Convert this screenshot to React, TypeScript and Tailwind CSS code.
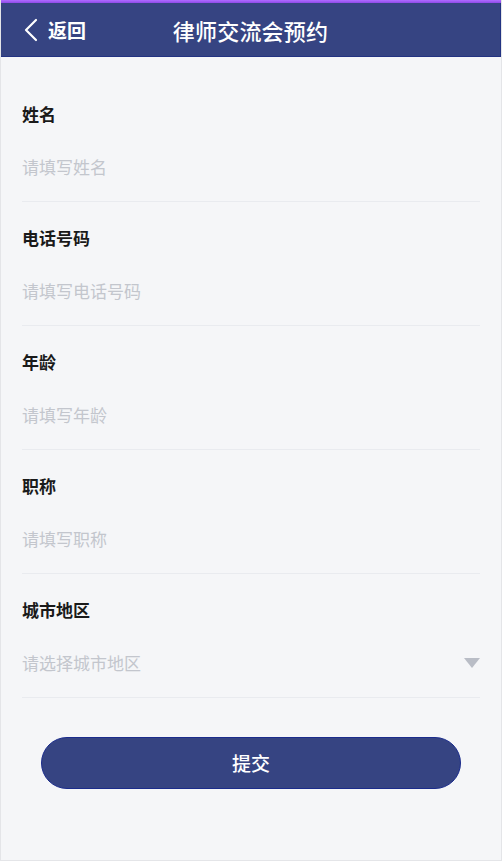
import * as React from "react";

const fields: { label: string; placeholder: string; select?: boolean }[] = [
  { label: "姓名", placeholder: "请填写姓名" },
  { label: "电话号码", placeholder: "请填写电话号码" },
  { label: "年龄", placeholder: "请填写年龄" },
  { label: "职称", placeholder: "请填写职称" },
  { label: "城市地区", placeholder: "请选择城市地区", select: true },
];

const App: React.FC = () => {
  const [values, setValues] = React.useState<Record<string, string>>({});

  return (
    <div
      className="w-[502px] h-[861px] flex flex-col bg-[#f5f6f8] border-x border-b border-[#e4e5e8]"
      style={{ fontFamily: '"Noto Sans CJK SC", "Noto Sans", sans-serif' }}
    >
      {/* top strip */}
      <div className="h-[3px] bg-gradient-to-b from-[#b06cff] to-[#8f49e8]" />

      <header className="h-[54px] bg-[#364482] border-r border-b border-[#233382] grid grid-cols-[1fr_auto_1fr] items-center text-white">
        <button className="flex items-center gap-[9px] pl-[22px] justify-self-start">
          <svg width="16" height="24" viewBox="0 0 16 24" fill="none">
            <path
              d="M13 2 L3 12 L13 22"
              stroke="white"
              strokeWidth="2.2"
              strokeLinecap="round"
              strokeLinejoin="round"
            />
          </svg>
          <span className="text-[19px] font-bold leading-none">返回</span>
        </button>
        <h1 className="text-[22px] font-medium leading-none tracking-[0.2px]">
          律师交流会预约
        </h1>
        <div />
      </header>

      <div className="flex-1 px-[21px] pt-[21px]">
        {fields.map((f) => (
          <div
            key={f.label}
            className="pt-[25px] pb-[23px] border-b border-[#e9ebef]"
          >
            <div className="text-[17px] leading-[22px] font-bold text-[#1a1a1a]">
              {f.label}
            </div>
            <div className="mt-[31px] h-[22px] flex items-center">
              {f.select ? (
                <>
                  <span className="flex-1 text-[17px] leading-[22px] text-[#c3c6cd]">
                    {f.placeholder}
                  </span>
                  <svg width="16" height="10" viewBox="0 0 16 10" className="mr-[0px]">
                    <path d="M0 0 H16 L8 10 Z" fill="#b9bdc6" />
                  </svg>
                </>
              ) : (
                <input
                  className="w-full bg-transparent outline-none text-[17px] leading-[22px] text-[#1a1a1a] placeholder:text-[#c3c6cd]"
                  placeholder={f.placeholder}
                  value={values[f.label] || ""}
                  onChange={(e) =>
                    setValues({ ...values, [f.label]: e.target.value })
                  }
                />
              )}
            </div>
          </div>
        ))}

        <button className="mt-[39px] mx-[19px] w-[420px] h-[52px] rounded-full bg-[#364482] border border-[#1b2c8c] text-white text-[19px] font-medium">
          提交
        </button>
      </div>
    </div>
  );
};

export default App;
